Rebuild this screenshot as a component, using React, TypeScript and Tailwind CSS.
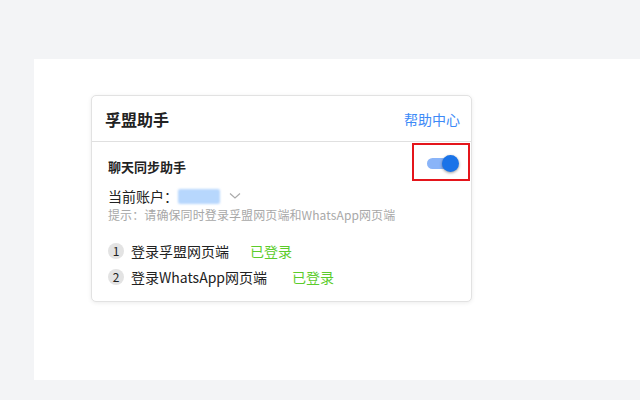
import React from "react";

export default function App() {
  return (
    <div
      className="w-[640px] h-[400px] bg-[#f3f4f6] pt-[59px] pl-[34px] overflow-hidden"
      style={{ fontFamily: '"Noto Sans CJK SC", "Noto Sans", sans-serif' }}
    >
      <div className="bg-white h-[321px] pt-[36px] pl-[57px]">
        <div className="w-[381px] h-[207px] bg-white border border-[#e2e2e2] rounded-[5px] shadow-[0_1px_4px_rgba(0,0,0,0.08)] flex flex-col">
          <div className="h-[46px] border-b border-[#e0e0e0] flex items-center justify-between pl-[13px] pr-[11px]">
            <span className="text-[16px] font-bold text-[#222] leading-[22px]">孚盟助手</span>
            <span className="text-[14px] text-[#3d8af7] leading-[20px]">帮助中心</span>
          </div>
          <div className="relative flex-1 pl-[16px] pt-[15px]">
            <div className="absolute top-[1px] right-[1px] w-[58px] h-[38px] border-2 border-[#e4151b] flex items-center justify-center">
              <div className="relative w-[32px] h-[17px] ml-[4px] mt-[2px]">
                <div className="absolute left-0 top-[3px] w-[26px] h-[11px] rounded-full bg-[#8ab4f8]" />
                <div className="absolute right-0 top-0 w-[17px] h-[17px] rounded-full bg-[#1a73e8] shadow-[0_1px_3px_rgba(0,0,0,0.4)]" />
              </div>
            </div>
            <div className="text-[13px] font-bold text-[#222] leading-[20px]">聊天同步助手</div>
            <div className="mt-[9px] flex items-center text-[14px] text-[#222] leading-[20px]">
              <span>当前账户：</span>
              <span className="w-[42px] h-[15px] bg-[#b7d7fd] blur-[1px] rounded-[2px]" />
              <svg className="ml-[9px]" width="12" height="8" viewBox="0 0 12 8" fill="none">
                <path d="M1 1.5 L6 6 L11 1.5" stroke="#aaa" strokeWidth="1.2" />
              </svg>
            </div>
            <div className="text-[12px] text-[#a8a8a8] leading-[18px] tracking-[0.1px]">
              提示：请确保同时登录孚盟网页端和WhatsApp网页端
            </div>
            <div className="mt-[16px] flex items-center h-[22px] text-[14px] text-[#222]">
              <span className="w-[16px] h-[16px] rounded-full bg-[#e3e3e3] text-[12px] flex items-center justify-center leading-none">1</span>
              <span className="ml-[7px] w-[119px]">登录孚盟网页端</span>
              <span className="text-[#5ccc2c]">已登录</span>
            </div>
            <div className="mt-[4px] flex items-center h-[22px] text-[14px] text-[#222]">
              <span className="w-[16px] h-[16px] rounded-full bg-[#e3e3e3] text-[12px] flex items-center justify-center leading-none">2</span>
              <span className="ml-[7px] w-[161px]">登录WhatsApp网页端</span>
              <span className="text-[#5ccc2c]">已登录</span>
            </div>
          </div>
        </div>
      </div>
    </div>
  );
}
